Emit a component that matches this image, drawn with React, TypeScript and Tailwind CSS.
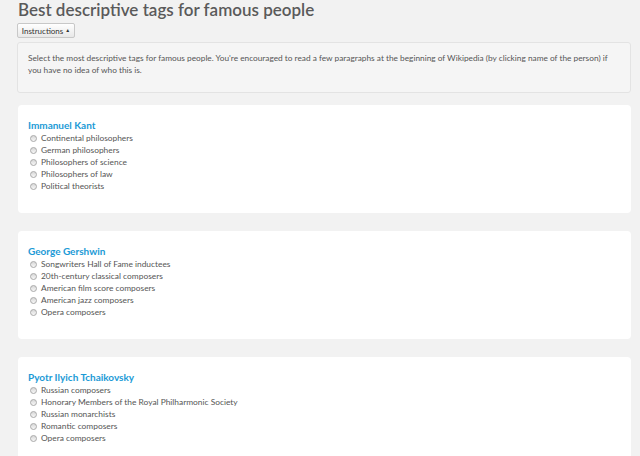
const people = [
  {
    name: "Immanuel Kant",
    tags: [
      "Continental philosophers",
      "German philosophers",
      "Philosophers of science",
      "Philosophers of law",
      "Political theorists",
    ],
  },
  {
    name: "George Gershwin",
    tags: [
      "Songwriters Hall of Fame inductees",
      "20th-century classical composers",
      "American film score composers",
      "American jazz composers",
      "Opera composers",
    ],
  },
  {
    name: "Pyotr Ilyich Tchaikovsky",
    tags: [
      "Russian composers",
      "Honorary Members of the Royal Philharmonic Society",
      "Russian monarchists",
      "Romantic composers",
      "Opera composers",
    ],
  },
];

const Radio = () => (
  <span className="ml-[2px] w-[7px] h-[7px] rounded-full border border-[#a9a9a9] bg-gradient-to-b from-[#d8d8d8] to-[#f7f7f7] shrink-0" />
);

export default function App() {
  return (
    <div
      className="min-h-screen w-full bg-[#f2f2f2] pl-[17px] pb-6"
      style={{ fontFamily: "Lato, 'Open Sans', sans-serif" }}
    >
      <div className="w-[614px]">
        <h1 className="pl-[1px] text-[17px] leading-[19px] font-semibold text-[#5a5a5a]">
          Best descriptive tags for famous people
        </h1>

        <button className="mt-[4px] h-[15px] w-[58px] flex items-center justify-center gap-[2px] rounded-[2px] border border-[#c8c8c8] bg-gradient-to-b from-white to-[#e8e8e8] text-[8px] text-[#333]">
          Instructions
          <span className="text-[5px] leading-none">▲</span>
        </button>

        <div className="mt-[4px] h-[51px] rounded-[3px] border border-[#e3e3e3] bg-[#f5f5f5] pt-[9px] px-[10px] text-[8.3px] leading-[12px] text-[#555]">
          Select the most descriptive tags for famous people. You're encouraged to read a few paragraphs at the
          beginning of Wikipedia (by clicking name of the person) if you have no idea of who this is.
        </div>

        <div className="mt-[12px] flex flex-col gap-[18px] ml-[1px] w-[613px]">
          {people.map((p) => (
            <div key={p.name} className="h-[108px] rounded-[4px] bg-white pt-[13px] pl-[10px]">
              <a className="block text-[10px] leading-[14px] font-bold text-[#1b9ad6]">{p.name}</a>
              <div className="flex flex-col">
                {p.tags.map((t) => (
                  <label key={t} className="flex items-center gap-[4px] h-[12px] text-[8.4px] text-[#555]">
                    <Radio />
                    <span>{t}</span>
                  </label>
                ))}
              </div>
            </div>
          ))}
        </div>
      </div>
    </div>
  );
}
